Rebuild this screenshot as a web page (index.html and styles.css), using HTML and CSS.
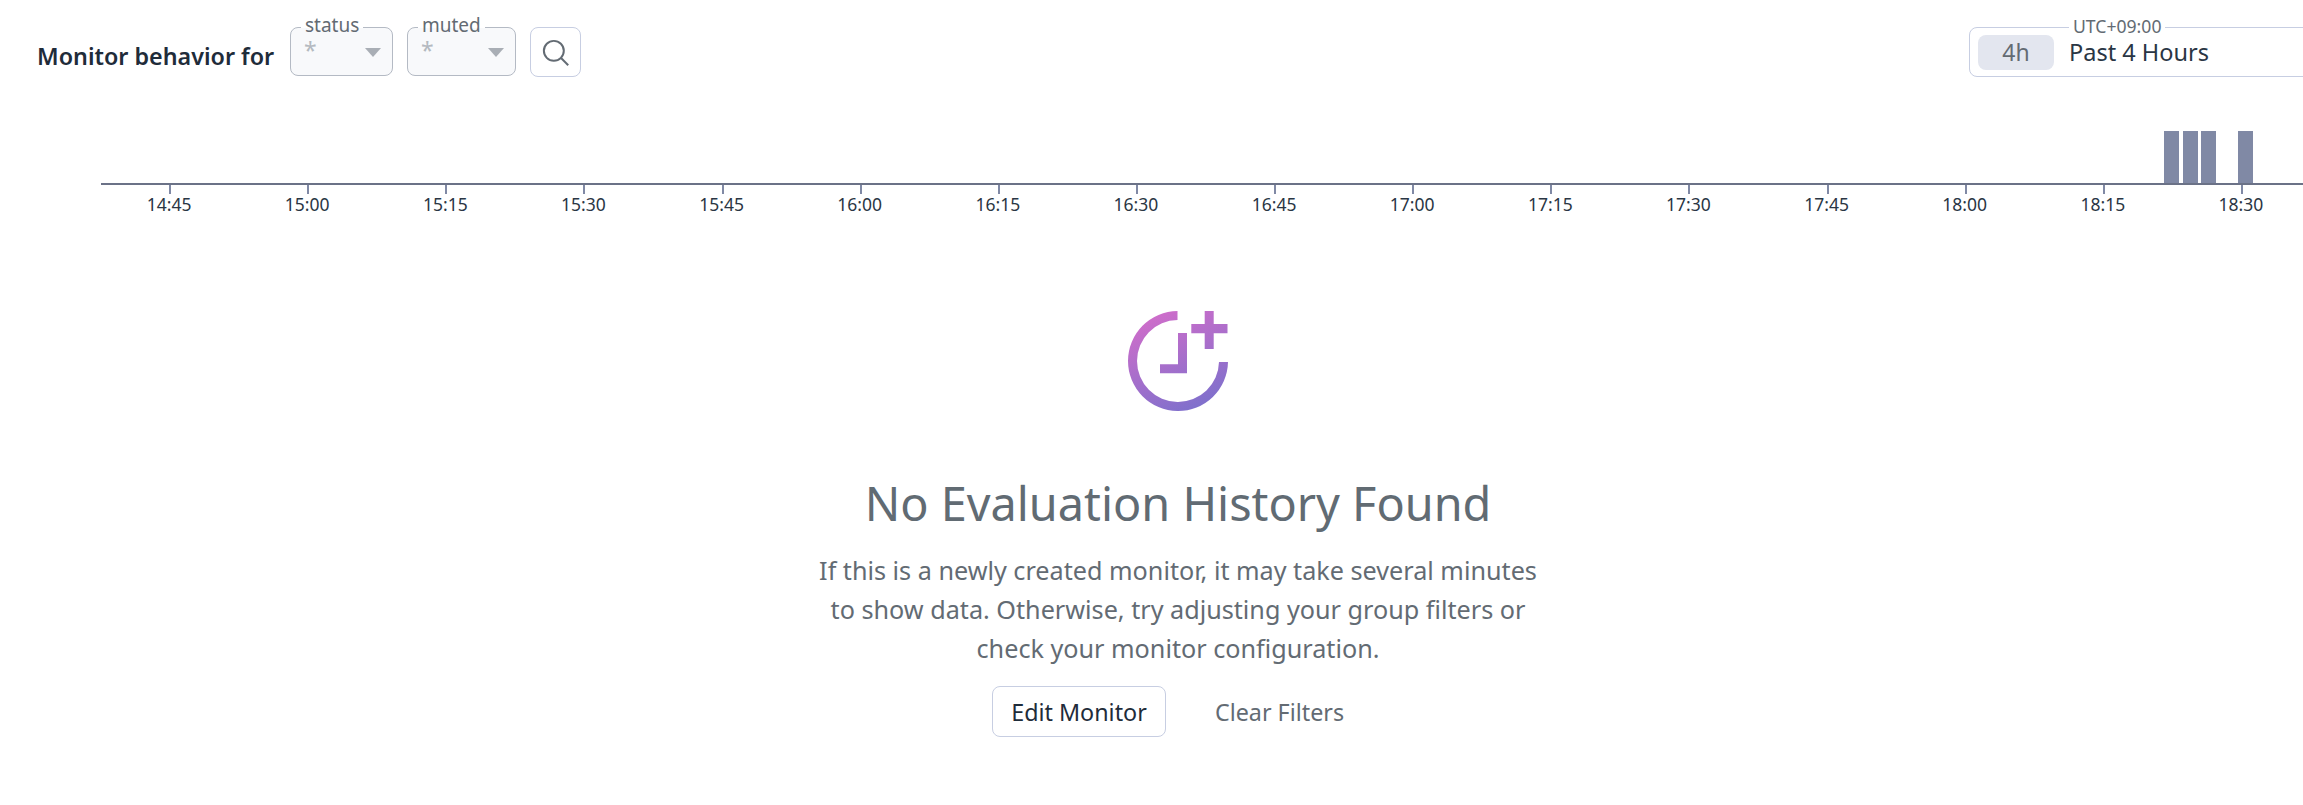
FILE: index.html
```html
<!DOCTYPE html>
<html lang="en">
<head>
    <meta charset="UTF-8">
    <meta name="viewport" content="width=device-width, initial-scale=1.0">
    <title>Monitor behavior</title>
    <link rel="stylesheet" href="styles.css">
</head>
<body>
    <div class="toolbar">
        <span class="toolbar-title">Monitor behavior for</span>
        <div class="filter filter-status">
            <span class="filter-label">status</span>
            <span class="filter-value">*</span>
            <span class="filter-caret"></span>
        </div>
        <div class="filter filter-muted">
            <span class="filter-label">muted</span>
            <span class="filter-value">*</span>
            <span class="filter-caret"></span>
        </div>
        <button class="search-btn" aria-label="Search">
            <svg width="31" height="31" viewBox="0 0 28 28" fill="none" stroke="#636b73" stroke-width="1.8">
                <circle cx="12.5" cy="12.5" r="9"/>
                <path d="M19 19l6.5 6.5"/>
            </svg>
        </button>
        <div class="timepicker">
            <span class="timepicker-label">UTC+09:00</span>
            <span class="timepicker-chip">4h</span>
            <span class="timepicker-text">Past 4 Hours</span>
        </div>
    </div>

    <div class="chart">
        <div class="bars">
            <span class="bar" style="left: 2164px"></span>
            <span class="bar" style="left: 2183px"></span>
            <span class="bar" style="left: 2201px"></span>
            <span class="bar" style="left: 2238px"></span>
        </div>
        <div class="axis">
            <div class="tick">14:45</div>
            <div class="tick">15:00</div>
            <div class="tick">15:15</div>
            <div class="tick">15:30</div>
            <div class="tick">15:45</div>
            <div class="tick">16:00</div>
            <div class="tick">16:15</div>
            <div class="tick">16:30</div>
            <div class="tick">16:45</div>
            <div class="tick">17:00</div>
            <div class="tick">17:15</div>
            <div class="tick">17:30</div>
            <div class="tick">17:45</div>
            <div class="tick">18:00</div>
            <div class="tick">18:15</div>
            <div class="tick">18:30</div>
        </div>
    </div>

    <div class="empty">
        <svg class="empty-icon" width="100" height="100" viewBox="0 0 100 100">
            <defs>
                <linearGradient id="iconGrad" gradientUnits="userSpaceOnUse" x1="25" y1="0" x2="70" y2="100">
                    <stop offset="0" stop-color="#d16dca"/>
                    <stop offset="1" stop-color="#7d70cc"/>
                </linearGradient>
            </defs>
            <path fill="url(#iconGrad)" d="M49.500 0V9A41 41 0 1 0 91 51H100A50 50 0 1 1 49.500 0Z"/>
            <path fill="url(#iconGrad)" d="M50 22H59V62.300H32V53.300H50Z"/>
            <path fill="url(#iconGrad)" d="M76.700 0H85.700V13H99.500V22.300H85.700V38H76.700V22.300H63.300V13H76.700Z"/>
        </svg>
        <h2 class="empty-title">No Evaluation History Found</h2>
        <p class="empty-text">If this is a newly created monitor, it may take several minutes<br>to show data. Otherwise, try adjusting your group filters or<br>check your monitor configuration.</p>
        <div class="empty-actions">
            <button class="btn">Edit Monitor</button>
            <button class="btn-link">Clear Filters</button>
        </div>
    </div>
</body>
</html>
```

FILE: styles.css
```css
html, body {
    margin: 0;
    height: 100%;
    overflow: hidden;
    background: #fff;
}

body {
    font-family: "Noto Sans", sans-serif;
    color: #1f2c3a;
}

.toolbar {
    display: flex;
    align-items: flex-start;
    height: 131px;
    padding: 27px 0 0 37px;
    box-sizing: border-box;
}

.toolbar-title {
    flex: 0 0 253px;
    margin-top: 14px;
    font-size: 23.3px;
    line-height: 30px;
    font-weight: 600;
    white-space: nowrap;
}

.filter {
    position: relative;
    height: 49px;
    box-sizing: border-box;
    background: #f8f9fb;
    border: 1px solid #b4bac4;
    border-radius: 8px;
}

.filter-status {
    flex: 0 0 103px;
    margin-right: 14px;
}

.filter-muted {
    flex: 0 0 109px;
    margin-right: 14px;
}

.filter-label {
    position: absolute;
    top: -15px;
    left: 10px;
    padding: 0 4px;
    background: linear-gradient(#fff 15px, transparent 15px);
    font-size: 19px;
    line-height: 24px;
    color: #636b73;
}

.filter-value {
    position: absolute;
    left: 13px;
    top: 7px;
    font-size: 23px;
    line-height: 30px;
    color: #b4b9c0;
}

.filter-caret {
    position: absolute;
    right: 11px;
    top: 20px;
    border-style: solid;
    border-width: 9px 8px 0;
    border-color: #a9aeb5 transparent transparent;
}

.search-btn {
    flex: 0 0 51px;
    height: 50px;
    padding: 0;
    display: flex;
    align-items: center;
    justify-content: center;
    background: #fff;
    border: 1px solid #c7cee2;
    border-radius: 8px;
}

.timepicker {
    position: absolute;
    left: 1969px;
    top: 27px;
    width: 400px;
    height: 50px;
    box-sizing: border-box;
    display: flex;
    align-items: center;
    padding-left: 8px;
    border: 1px solid #c7cee2;
    border-radius: 8px;
}

.timepicker-label {
    position: absolute;
    left: 99px;
    top: -13px;
    padding: 0 4px;
    background: #fff;
    font-size: 17.6px;
    line-height: 22px;
    color: #636b73;
}

.timepicker-chip {
    width: 76px;
    height: 35px;
    margin-right: 15px;
    background: #e3e6ef;
    border-radius: 8px;
    text-align: center;
    font-size: 23px;
    line-height: 35px;
    color: #636b73;
}

.timepicker-text {
    font-size: 23.5px;
    color: #2a3644;
}

.chart {
    position: relative;
}

.bars {
    height: 52px;
}

.bar {
    position: absolute;
    top: 0;
    width: 15px;
    height: 52px;
    background: #8089a5;
}

.axis {
    display: flex;
    margin-left: 101px;
    height: 40px;
    border-top: 2px solid #6b7287;
    width: 2202px;
}

.tick {
    position: relative;
    left: -1px;
    flex: 0 0 138.13px;
    padding-top: 7px;
    text-align: center;
    font-size: 17.5px;
    line-height: 24px;
    color: #2a3644;
}

.tick::before {
    content: "";
    position: absolute;
    top: 0;
    left: 50%;
    width: 2px;
    height: 9px;
    background: #8089a5;
}

.empty {
    display: flex;
    flex-direction: column;
    align-items: center;
    width: 600px;
    margin: 0 0 0 878px;
    padding-top: 86px;
}

.empty-icon {
    margin-bottom: 62px;
}

.empty-title {
    margin: 0;
    font-size: 46.8px;
    line-height: 60px;
    font-weight: 400;
    color: #616b73;
    white-space: nowrap;
}

.empty-text {
    margin: 18px 0 18px;
    text-align: center;
    font-size: 25.2px;
    line-height: 39px;
    color: #636b73;
    white-space: nowrap;
}

.empty-actions {
    display: flex;
    align-items: center;
    align-self: flex-start;
    margin-left: 114px;
}

.btn {
    flex: 0 0 174px;
    height: 51px;
    padding: 0;
    background: #fff;
    border: 1px solid #c7cee2;
    border-radius: 8px;
    font: inherit;
    font-size: 23.3px;
    color: #1f2c3a;
    white-space: nowrap;
}

.btn-link {
    margin-left: 49px;
    padding: 0;
    background: none;
    border: 0;
    font: inherit;
    font-size: 23.3px;
    color: #636b73;
    white-space: nowrap;
}
```
